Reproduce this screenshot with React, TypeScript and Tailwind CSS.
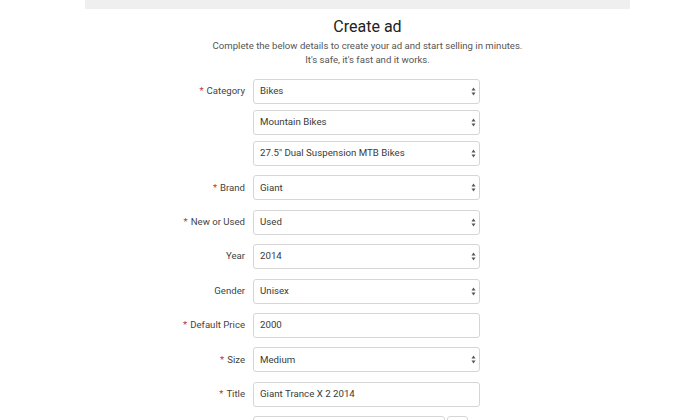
import React from "react"

type Field = {
  label?: string
  required?: boolean
  value: string
  select?: boolean
}

const groups: Field[][] = [
  [
    { label: "Category", required: true, value: "Bikes", select: true },
    { value: "Mountain Bikes", select: true },
    { value: "27.5\" Dual Suspension MTB Bikes", select: true },
  ],
  [{ label: "Brand", required: true, value: "Giant", select: true }],
  [{ label: "New or Used", required: true, value: "Used", select: true }],
  [{ label: "Year", value: "2014", select: true }],
  [{ label: "Gender", value: "Unisex", select: true }],
  [{ label: "Default Price", required: true, value: "2000" }],
  [{ label: "Size", required: true, value: "Medium", select: true }],
  [{ label: "Title", required: true, value: "Giant Trance X 2 2014" }],
]

function Arrows() {
  return (
    <svg width="5" height="9" viewBox="0 0 5 9" className="absolute right-[3px] top-[7px]">
      <path d="M2.5 0.5 L4.5 3.5 L0.5 3.5 Z" fill="#555" />
      <path d="M2.5 8.5 L4.5 5.5 L0.5 5.5 Z" fill="#555" />
    </svg>
  )
}

function Row({ field }: { field: Field }) {
  return (
    <div className="flex h-[25px] items-center">
      <div className="w-[96px] pr-[1px] text-right text-[9.6px] text-[#444]">
        {field.required && <span className="mr-[3px] text-[#c0392b]">*</span>}
        {field.label}
      </div>
      <div className="relative ml-[7px] flex h-[25px] w-[227px] items-center rounded-[3px] border border-[#d6d6d6] bg-white pl-[6px] text-[9.7px] text-[#3a3a3a]">
        {field.value}
        {field.select && <Arrows />}
      </div>
    </div>
  )
}

export default function App() {
  return (
    <div className="h-[420px] w-[700px] overflow-hidden bg-white" style={{ fontFamily: "Roboto, 'Liberation Sans', sans-serif" }}>
      <div className="ml-[85px] h-[9px] w-[545px] bg-[#efefef]" />

      <div className="ml-[85px] mt-[8px] w-[565px] text-center">
        <h1 className="text-[16px] leading-[20px] text-[#222]">Create ad</h1>
        <p className="mt-[2px] text-[9.6px] leading-[14px] text-[#555]">
          Complete the below details to create your ad and start selling in minutes.
          <br />
          It's safe, it's fast and it works.
        </p>
      </div>

      <div className="ml-[150px] mt-[12px] flex flex-col gap-[9.4px]">
        {groups.map((g, i) => (
          <div key={i} className="flex flex-col gap-[6px]">
            {g.map((f, j) => (
              <Row key={j} field={f} />
            ))}
          </div>
        ))}
        <div className="flex h-[25px]">
          <div className="w-[96px]" />
          <div className="ml-[7px] h-[25px] w-[192px] rounded-[3px] border border-[#d6d6d6]" />
          <div className="ml-[2px] h-[25px] w-[21px] rounded-[3px] border border-[#d6d6d6]" />
        </div>
      </div>
    </div>
  )
}
